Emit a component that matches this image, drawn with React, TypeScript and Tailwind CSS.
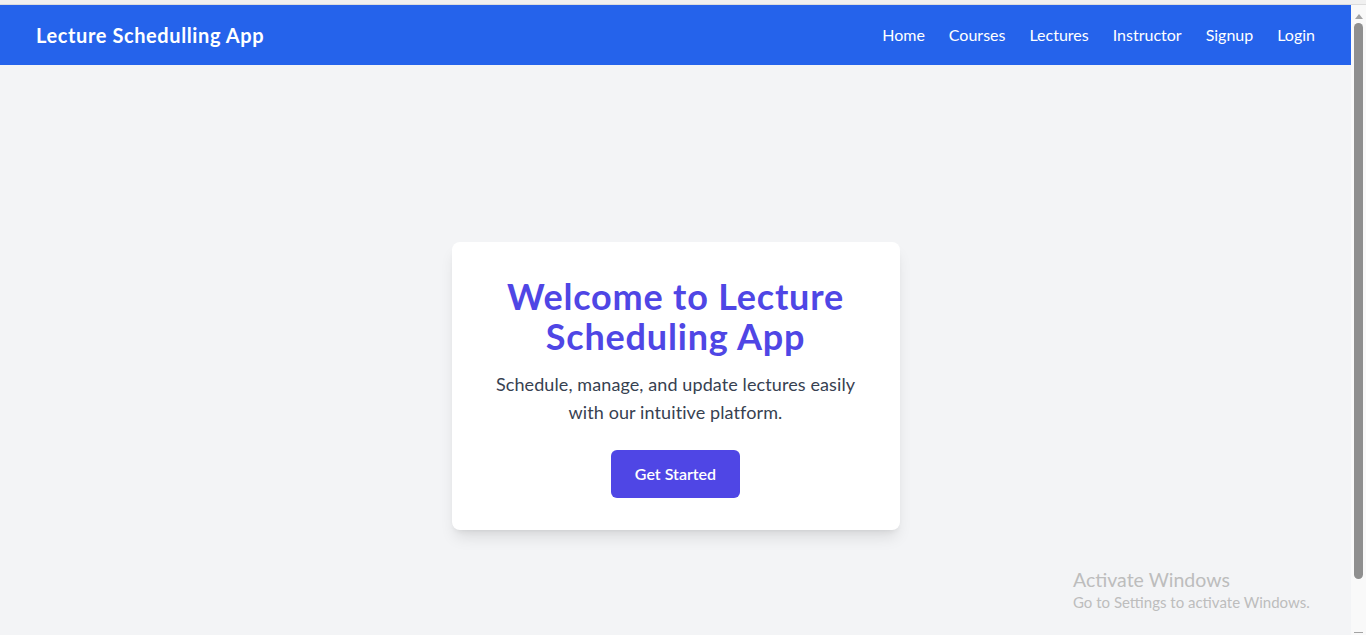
import React from 'react';

const navLinks = ['Home', 'Courses', 'Lectures', 'Instructor', 'Signup', 'Login'];

const Navbar = () => (
  <nav className="h-[60px] bg-[#2563eb] text-white flex items-center justify-between px-9">
    <span className="text-xl font-bold tracking-[0.6px]">Lecture Schedulling App</span>
    <ul className="flex items-center gap-6">
      {navLinks.map((link) => (
        <li key={link}>
          <a href="#" className="text-base hover:text-blue-100">
            {link}
          </a>
        </li>
      ))}
    </ul>
  </nav>
);

const Scrollbar = () => (
  <div className="w-[15px] shrink-0 bg-[#f9f9f9] flex flex-col items-center">
    <div className="mt-[9px] w-0 h-0 border-l-[4px] border-r-[4px] border-b-[5px] border-l-transparent border-r-transparent border-b-[#a3a3a3]" />
    <div className="mt-[4px] w-[9px] h-[556px] rounded-full bg-[#8f8f8f]" />
    <div className="mt-auto mb-[2px] w-[9px] h-[1px] bg-[#a3a3a3]" />
  </div>
);

const App = () => {
  return (
    <div className="h-[635px] overflow-hidden bg-[#f0f0f0] font-['Lato',sans-serif] flex flex-col">
      <div className="h-[5px] shrink-0 bg-[#f0f0f0] border-b border-[#dcdcdc]" />
      <div className="flex flex-1 min-h-0">
        <div className="flex-1 flex flex-col bg-[#f3f4f6] relative">
          <Navbar />
          <main className="flex justify-center pt-[177px]">
            <div className="w-[448px] bg-white rounded-lg shadow-lg p-8 text-center">
              <h1 className="text-4xl font-bold text-[#4f46e5] tracking-[0.8px] pt-[2px] -mb-[2px]">
                Welcome to Lecture Scheduling App
              </h1>
              <p className="mt-4 text-lg text-[#374151] tracking-[0.1px]">
                Schedule, manage, and update lectures easily with our intuitive platform.
              </p>
              <button className="mt-6 bg-[#4f46e5] text-white font-semibold px-6 py-3 rounded-md hover:bg-[#4338ca]">
                Get Started
              </button>
            </div>
          </main>
          <div className="absolute left-[1073px] top-[563px] text-[#bdbdbd] pointer-events-none">
            <div className="text-[19.5px] leading-6">Activate Windows</div>
            <div className="text-[15px] leading-5">Go to Settings to activate Windows.</div>
          </div>
        </div>
        <Scrollbar />
      </div>
    </div>
  );
};

export default App;
